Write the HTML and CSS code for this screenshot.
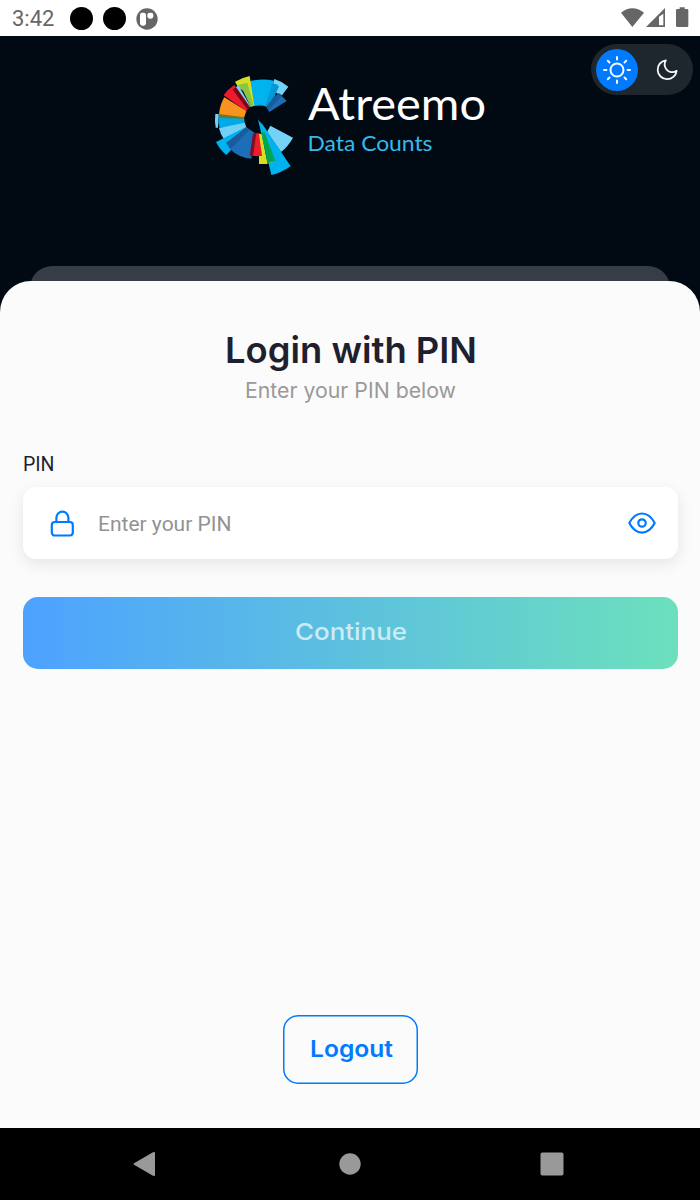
FILE: index.html
```html
<!DOCTYPE html>
<html lang="en">
<head>
<meta charset="utf-8">
<title>Atreemo - Login with PIN</title>
<link rel="stylesheet" href="styles.css">
</head>
<body>
<div class="screen">
  <div class="status">
    <span class="clock">3:42</span>
    <i class="dot"></i><i class="dot"></i>
    <svg class="app" width="22" height="22" viewBox="0 0 66 66"><circle cx="33" cy="33" r="32" fill="#666"/><rect x="12" y="14" width="18" height="39" rx="7" fill="#fff"/><rect x="34" y="14" width="18" height="18" rx="7" fill="#fff"/></svg>
    <svg class="signals" width="70" height="22" viewBox="0 0 210 66" fill="#666"><path d="M3 17Q37-9 72 17L37 60Z"/><path fill-rule="evenodd" d="M78 60L135 3V60ZM117 29V55H130V20Z"/><path d="M172 6h7V1h15v5h7q4 0 4 4v46q0 4-4 4h-29q-4 0-4-4V10q0-4 4-4Z"/></svg>
  </div>
  <header class="hero">
    <svg class="mark" width="100" height="110" viewBox="0 0 300 330">
      <path fill="#00b2ee" d="M133 34Q170 24 207 32L188 111Q168 104 147 108Z"/>
      <path fill="#75d2f7" d="M208 27Q231 34 250 50L231 76L207 66L195 111L188 108Z"/>
      <path fill="#0099d5" d="M202 40Q214 42 222 49L208 81L193 111L181 108Z"/>
      <path fill="#1c6fb6" d="M222 70L245 93L193 126L184 111L206 81Z"/>
      <path fill="#185c9d" d="M222 70L231 77L191 119L184 111L206 81Z"/>
      <path fill="#d7df23" d="M90 35Q111 23 134 18L148 107L139 110L125 70L99 51Z"/>
      <path fill="#8bc53f" d="M97 46Q113 40 127 38L146 107L137 110L113 60Z"/>
      <path fill="#75d2f7" d="M90 52L101 47L137 110L130 113Z"/>
      <path fill="#ec1c2c" d="M56 76Q69 57 88 45L132 113L123 123Z"/>
      <path fill="#7b0719" d="M83 59L93 51L135 111L127 118Z"/>
      <path fill="#f7931e" d="M42 134Q44 105 58 82L124 123L117 143Z"/>
      <path fill="#6e7b20" d="M41 132L118 142V149L40 144Z"/>
      <path fill="#75d2f7" d="M31 132H41L39 173H32Q28 155 31 132Z"/>
      <path fill="#00a9e7" d="M40 143L117 146L120 161L44 174Q39 160 40 143Z"/>
      <path fill="#71d0f5" d="M42 174L119 158L124 172L56 206Q46 192 42 174Z"/>
      <path fill="#00b2ee" d="M33 216L124 171L132 184L64 255Q45 240 33 216Z"/>
      <path fill="#1c6fb6" d="M64 218L124 172L151 190L139 266Q99 262 74 236Z"/>
      <path fill="#185c9d" d="M64 218L124 172L132 181L77 237Z"/>
      <path fill="#ec1c2c" d="M146 190H166L171 258H140Z"/>
      <path fill="#800e24" d="M144 190H154L144 258H134Z"/>
      <path fill="#d7df23" d="M162 192H170L188 282H162V258H171Z"/>
      <path fill="#75d2f7" d="M196 167L264 203Q249 230 228 246L186 186Z"/>
      <path fill="#00b2ee" d="M159 149L174 165L257 289Q228 309 199 315Z"/>
      <path fill="#8bc53f" d="M171 190L190 278L206 276L177 188Z"/>
      <path fill="#00a651" d="M170 187L179 187L211 273L187 278Z"/>
      <path fill="#00b2ee" d="M179 187L228 247L217 254L203 243Z"/>
    </svg>
    <svg class="wordmark" width="200" height="96" viewBox="300 70 200 96"><text x="308" y="120" class="brand" textLength="178" lengthAdjust="spacingAndGlyphs">Atreemo</text><text x="307.500" y="151" class="tag" textLength="125" lengthAdjust="spacingAndGlyphs">Data Counts</text></svg>
    <div class="theme">
      <span class="sun"><svg width="28" height="28" viewBox="0 0 28 28"><circle cx="14" cy="14" r="6.5"/><path d="M14 1V3.400M14 24.600V27M1 14H3.400M24.600 14H27M4.800 4.800L6.500 6.500M21.500 21.500L23.200 23.200M4.800 23.200L6.500 21.500M21.500 6.500L23.200 4.800"/></svg></span>
      <svg class="moon" width="22" height="22" viewBox="0 0 22 22"><path d="M9.800 1.300A9.500 9.500 0 1 0 20.600 11.800C17 14.200 12.500 13.200 10.300 10.200C8.300 7.500 8.200 4.200 9.800 1.300Z"/></svg>
    </div>
  </header>
  <div class="backcard"></div>
  <main class="sheet">
    <svg class="heading" width="300" height="90" viewBox="200 320 300 90"><text class="title" x="225" y="363" textLength="252" lengthAdjust="spacingAndGlyphs">Login with PIN</text><text class="sub" x="245" y="398" textLength="211" lengthAdjust="spacingAndGlyphs">Enter your PIN below</text></svg>
    <label class="label">PIN</label>
    <div class="field">
      <svg class="lock" width="25" height="28" viewBox="0 0 25 28"><rect x="1.800" y="12" width="21" height="13.500" rx="3"/><path d="M6.400 12V7.700a6 6 0 0 1 12 0V12"/></svg>
      <span>Enter your PIN</span>
      <svg class="eye" width="28" height="22" viewBox="0 0 28 22"><path d="M1.300 11C8-1.700 20-1.700 26.700 11C20 23.700 8 23.700 1.300 11Z"/><circle cx="14" cy="11" r="3.700"/></svg>
    </div>
    <div class="continue"><svg width="120" height="40" viewBox="0 0 120 40"><text x="4" y="24" textLength="112" lengthAdjust="spacingAndGlyphs">Continue</text></svg></div>
    <div class="logout"><svg width="100" height="40" viewBox="0 0 100 40"><text x="9" y="27" textLength="83" lengthAdjust="spacingAndGlyphs">Logout</text></svg></div>
  </main>
  <nav class="nav">
    <svg width="460" height="72" viewBox="0 0 460 72" fill="#999"><path d="M14 35.200L33 24.200Q35 23 35 25.500V46.500Q35 49 33 47.800L14 36.800Q13 36 14 35.200Z"/><circle cx="230" cy="36" r="10.700"/><rect x="420.500" y="24.500" width="23" height="23" rx="2"/></svg>
  </nav>
</div>
</body>
</html>
```
FILE: styles.css
```css
* { box-sizing: border-box; }
body { margin: 0; font-family: Roboto, sans-serif; }
svg { display: block; flex: none; }
.screen { width: 700px; height: 1200px; display: flex; flex-direction: column; background: #010912; overflow: hidden; }
.status { height: 36px; flex: none; background: #fff; display: flex; align-items: center; padding: 0 12px 0 12px; color: #666; }
.clock { width: 58px; font-size: 22px; line-height: 36px; padding-top: 2px; }
.dot { width: 23px; height: 23px; border-radius: 50%; background: #000; margin-right: 10px; }
.app { margin-top: 1px; }
.signals { margin-left: auto; margin-right: -2px; margin-top: -1px; }
.hero { position: relative; height: 230px; flex: none; display: flex; padding: 34px 0 0 205px; }
.wordmark { margin: 0 0 0 -5px; }
.brand { font: 400 45px Lato, sans-serif; fill: #fff; }
.tag { font: 400 21px Lato, sans-serif; fill: #36b9e9; }
.theme { position: absolute; top: 8px; right: 7px; width: 102px; height: 51px; border-radius: 26px; background: #1e262e; display: flex; align-items: center; padding: 0 15px 0 5px; justify-content: space-between; }
.sun { width: 42px; height: 42px; border-radius: 50%; background: #007aff; display: flex; align-items: center; justify-content: center; }
.theme svg { fill: none; stroke: #f8fafc; stroke-width: 2; stroke-linecap: round; stroke-linejoin: round; }
.theme .moon { stroke-width: 1.8; }
.backcard { height: 30px; flex: none; margin: 0 30px -15px; background: #363d44; border-radius: 22px 22px 0 0; }
.sheet { position: relative; flex: 1; background: #fbfbfb; border-radius: 31px 31px 0 0; padding: 39px 22px 44px 23px; display: flex; flex-direction: column; align-items: stretch; }
.heading { margin-left: 177px; }
.title { font: 600 36px Inter, sans-serif; fill: #1f1f2e; }
.sub { font: 400 21px Inter, sans-serif; fill: #999; }
.label { font-size: 19.5px; line-height: 24px; margin-top: 43px; color: #1f1f2e; }
.field { height: 72px; margin-top: 10px; background: #fff; border-radius: 13px; box-shadow: 0 5px 16px rgba(0,0,0,.09); display: flex; align-items: center; padding: 0 22px 0 27px; font-size: 21px; color: #929292; }
.field span { margin: 2px auto 0 23px; }
.field svg { fill: none; stroke: #007aff; stroke-width: 2.2; stroke-linejoin: round; }
.field .lock { margin-top: 2px; }
.continue { height: 72px; margin-top: 38px; border-radius: 15px; background: linear-gradient(90deg, #4da2ff, #6ce0bd); display: flex; align-items: center; justify-content: center; }
.continue text { font: 500 23.500px Inter, sans-serif; fill: #cbecf5; }
.continue svg { margin-top: 6px; }
.logout { width: 135px; height: 69px; margin-top: auto; align-self: center; box-shadow: inset 0 0 0 1.5px #007aff; border-radius: 15px; display: flex; align-items: center; justify-content: center; }
.logout text { font: 600 23.500px Inter, sans-serif; fill: #007aff; }
.nav { height: 72px; flex: none; background: #000; display: flex; justify-content: center; }
```
